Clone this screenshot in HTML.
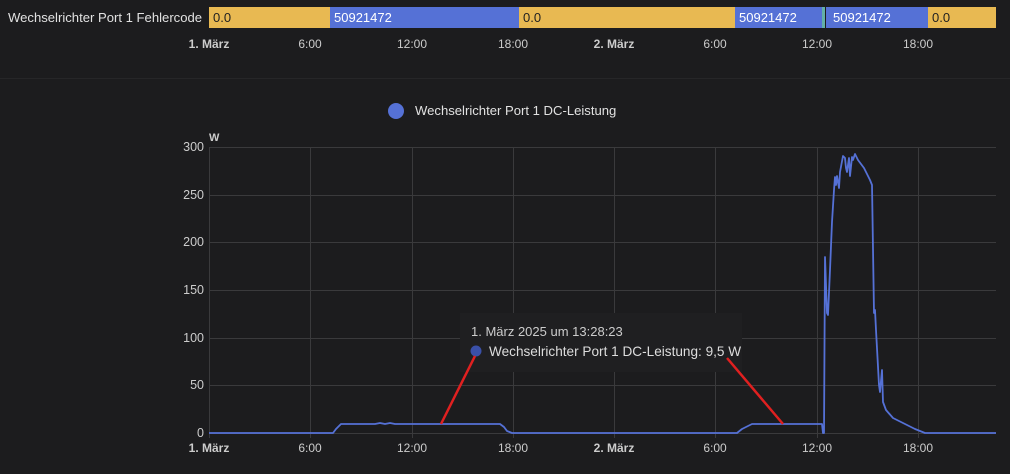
<!DOCTYPE html>
<html><head><meta charset="utf-8"><style>
html,body{margin:0;padding:0;background:#1c1c1e;width:1010px;height:474px;overflow:hidden;font-family:"Liberation Sans",sans-serif;}
svg{position:absolute;left:0;top:0}
</style></head><body>
<svg width="1010" height="474" viewBox="0 0 1010 474" font-family="Liberation Sans, sans-serif">
<text x="8" y="22" fill="#e1e1e1" font-size="13.1">Wechselrichter Port 1 Fehlercode</text>
<rect x="209" y="7" width="121" height="21" fill="#e8b952"/>
<rect x="330" y="7" width="189" height="21" fill="#5571d6"/>
<rect x="519" y="7" width="216" height="21" fill="#e8b952"/>
<rect x="735" y="7" width="87" height="21" fill="#5571d6"/>
<rect x="822" y="7" width="3" height="21" fill="#62b0a8"/>
<rect x="826" y="7" width="102" height="21" fill="#5571d6"/>
<rect x="928" y="7" width="68" height="21" fill="#e8b952"/>
<g font-size="13" fill="#222"><text x="213" y="22">0.0</text><text x="523" y="22">0.0</text><text x="932" y="22">0.0</text></g>
<g font-size="13" fill="#fff"><text x="334" y="22">50921472</text><text x="739" y="22">50921472</text><text x="833" y="22">50921472</text></g>
<g font-size="12" fill="#ccc" text-anchor="middle">
<text x="209" y="48" font-weight="bold">1. März</text><text x="310" y="48">6:00</text><text x="412" y="48">12:00</text><text x="513" y="48">18:00</text><text x="614" y="48" font-weight="bold">2. März</text><text x="715" y="48">6:00</text><text x="817" y="48">12:00</text><text x="918" y="48">18:00</text>
</g>
<line x1="0" y1="78.5" x2="1010" y2="78.5" stroke="#262628"/>
<circle cx="396" cy="111" r="8" fill="#5571d6"/>
<text x="415" y="115" fill="#e1e1e1" font-size="13.1">Wechselrichter Port 1 DC-Leistung</text>
<text x="209" y="141" fill="#ccc" font-size="11" font-weight="bold">W</text>
<g stroke="#3a3a3c" stroke-width="1">
<line x1="209" y1="147.5" x2="996" y2="147.5"/><line x1="209" y1="195.5" x2="996" y2="195.5"/><line x1="209" y1="242.5" x2="996" y2="242.5"/><line x1="209" y1="290.5" x2="996" y2="290.5"/><line x1="209" y1="338.5" x2="996" y2="338.5"/><line x1="209" y1="385.5" x2="996" y2="385.5"/><line x1="209" y1="433.5" x2="996" y2="433.5"/>
<line x1="209.5" y1="147" x2="209.5" y2="438"/><line x1="310.5" y1="147" x2="310.5" y2="438"/><line x1="412.5" y1="147" x2="412.5" y2="438"/><line x1="513.5" y1="147" x2="513.5" y2="438"/><line x1="614.5" y1="147" x2="614.5" y2="438"/><line x1="715.5" y1="147" x2="715.5" y2="438"/><line x1="817.5" y1="147" x2="817.5" y2="438"/><line x1="918.5" y1="147" x2="918.5" y2="438"/>
</g>
<g font-size="12.5" fill="#ccc" text-anchor="end">
<text x="204" y="151">300</text><text x="204" y="199">250</text><text x="204" y="246">200</text><text x="204" y="294">150</text><text x="204" y="342">100</text><text x="204" y="389">50</text><text x="204" y="437">0</text>
</g>
<g font-size="12" fill="#ccc" text-anchor="middle">
<text x="209" y="452" font-weight="bold">1. März</text><text x="310" y="452">6:00</text><text x="412" y="452">12:00</text><text x="513" y="452">18:00</text><text x="614" y="452" font-weight="bold">2. März</text><text x="715" y="452">6:00</text><text x="817" y="452">12:00</text><text x="918" y="452">18:00</text>
</g>
<polyline fill="none" stroke="#5571d6" stroke-width="1.8" stroke-linejoin="round" points="209,433 333,433 336,429 341,424 375,424 380,423 385,424 390,423 395,424 500,424 504,427 507,431 512,433 737,433 742,429 752,424 822,424 823,433 824,433 825,257 827,313 828,315 830,270 832,222 834,190 835,177 836,185 837,176 839,188 840,172 843,156 845,158 846,168 847,172 849,158 850,176 852,157 853,160 855,154 858,160 864,168 870,180 872,185 874,313 875,310 876,330 879,385 880,392 882,370 883,402 886,410 893,418 905,424 915,429 925,433 996,433"/>
<rect x="460" y="313" width="282" height="59" fill="#1f1f21"/>
<text x="471" y="336" fill="#ccc" font-size="13">1. März 2025 um 13:28:23</text>
<circle cx="476" cy="351" r="5.5" fill="#3a50a8"/>
<text x="489" y="356" fill="#ddd" font-size="13.6">Wechselrichter Port 1 DC-Leistung: 9,5 W</text>
<g stroke="#e02020" stroke-width="2.5"><line x1="475" y1="356" x2="441" y2="424"/><line x1="727" y1="358" x2="783" y2="424"/></g>
</svg>
</body></html>
